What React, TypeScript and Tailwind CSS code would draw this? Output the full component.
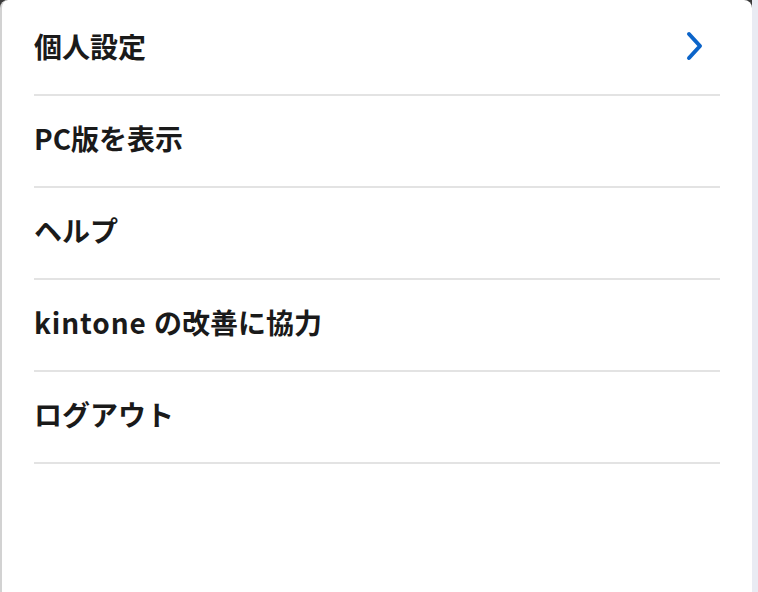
const items = [
  { label: "個人設定", arrow: true },
  { label: "PC版を表示", arrow: false },
  { label: "ヘルプ", arrow: false },
  { label: "kintone の改善に協力", arrow: false },
  { label: "ログアウト", arrow: false },
];

const Chevron = () => (
  <svg width="20" height="30" viewBox="0 0 20 30" className="mr-[15px]">
    <polyline
      points="4,3 15,15 4,27"
      fill="none"
      stroke="#0b64c9"
      strokeWidth="4"
      strokeLinecap="round"
      strokeLinejoin="round"
    />
  </svg>
);

// latin words are a little wider in the original font
const Label = ({ text }: { text: string }) => {
  if (text.startsWith("kintone")) {
    return (
      <>
        <span className="tracking-[0.9px]">kintone </span>
        {text.slice(8)}
      </>
    );
  }
  return <>{text}</>;
};

const App = () => {
  return (
    <div className="flex h-[592px] w-[758px] bg-[#e9ebf3]">
      <div className="w-[752px] h-full bg-[#3a3a3a]">
        <div className="h-full bg-white rounded-t-[8px] border-l-2 border-[#d2d2d2] px-8 pt-1 font-['Noto_Sans_CJK_JP','Noto_Sans',sans-serif]">
          {items.map((item) => (
            <div
              key={item.label}
              className="flex items-center justify-between h-[92px] pb-[7px] border-b-2 border-[#e3e3e3]"
            >
              <span className="text-[28px] font-bold text-[#1a1a1a] leading-none">
                <Label text={item.label} />
              </span>
              {item.arrow && <Chevron />}
            </div>
          ))}
        </div>
      </div>
    </div>
  );
};

export default App;
